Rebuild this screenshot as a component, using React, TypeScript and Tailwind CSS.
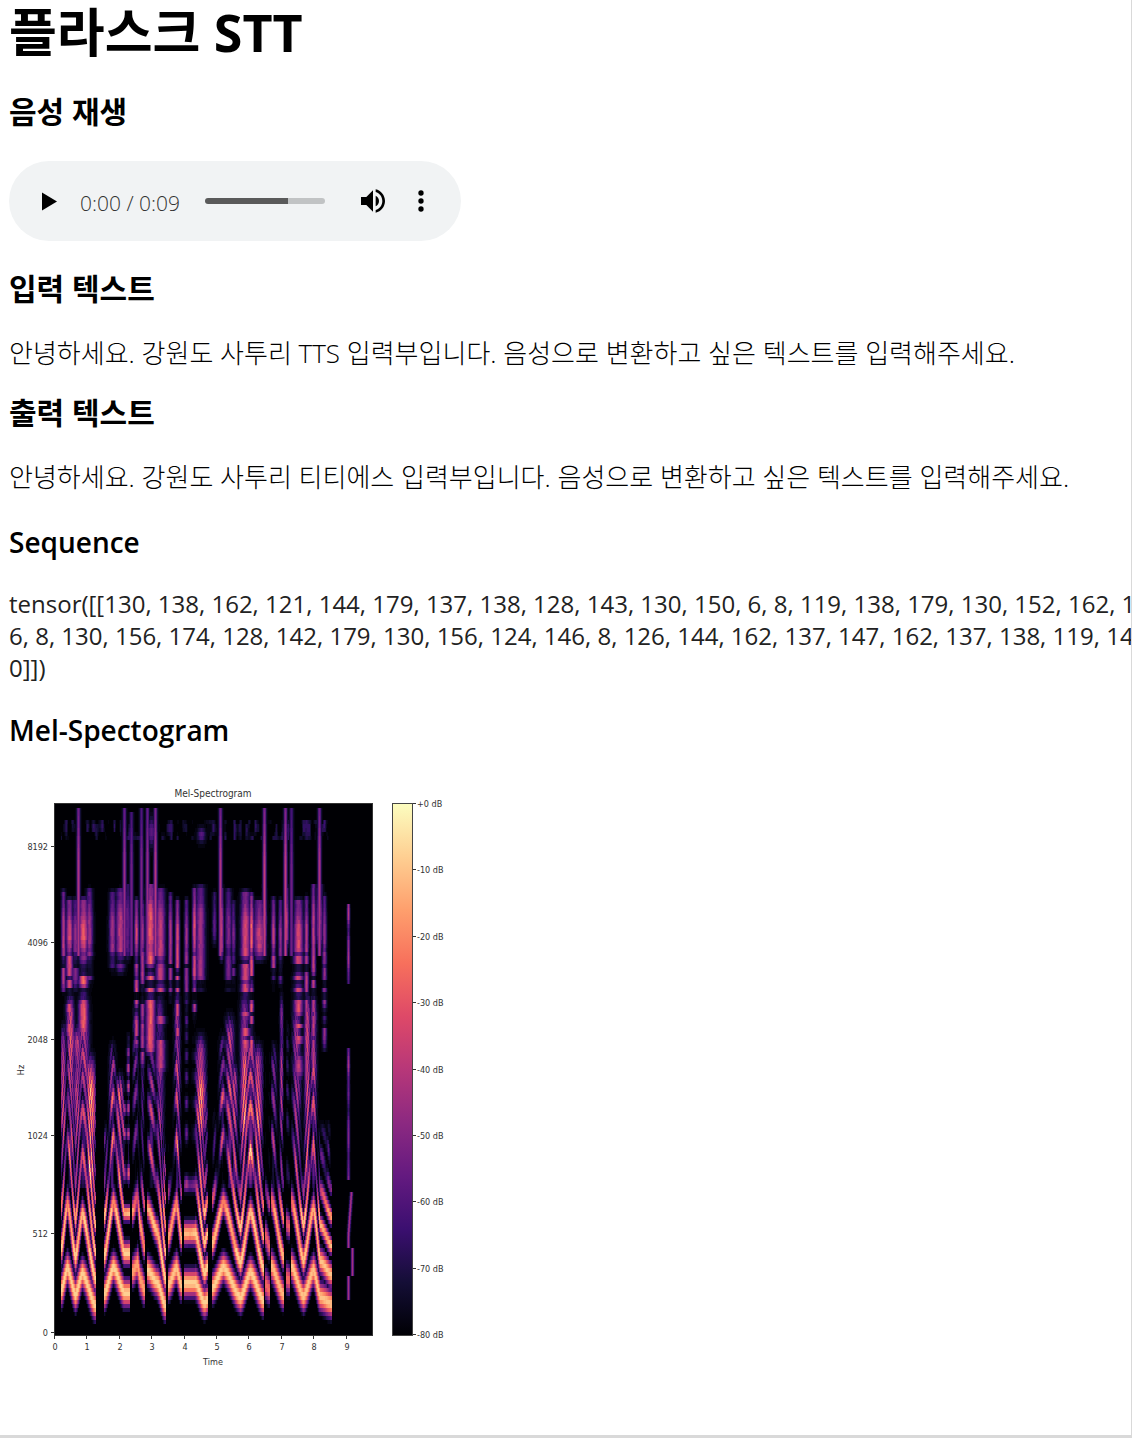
import React, { useMemo, useState } from "react";

const ORIGIN_X = 54;
const ORIGIN_Y = 804;
const PLOT_W = 319;
const PLOT_H = 531;
const CELL_W = 1;
const CELL_H = 4;

const MAGMA: [number, number, number][] = [
  [0, 0, 4],
  [20, 14, 54],
  [59, 15, 112],
  [100, 26, 128],
  [140, 41, 129],
  [183, 55, 121],
  [222, 73, 104],
  [247, 112, 92],
  [254, 159, 109],
  [254, 207, 146],
  [252, 253, 191],
];

function magma(v: number): string {
  const p = Math.max(0, Math.min(0.9999, v)) * (MAGMA.length - 1);
  const i = Math.floor(p);
  const f = p - i;
  const c = MAGMA[i].map((a, k) => Math.round(a + (MAGMA[i + 1][k] - a) * f));
  return `rgb(${c[0]},${c[1]},${c[2]})`;
}

type Voice = { pts: [number, number][]; gain: number };

// Pitch contours: x position and the height of the lowest harmonic.
const VOICES: Voice[] = [
  { pts: [[61, 1290], [67, 1268], [75, 1295], [82, 1273], [95, 1306]], gain: 1 },
  { pts: [[104, 1294], [113, 1267], [124, 1293], [129, 1293]], gain: 1 },
  { pts: [[132, 1272], [137, 1264], [140, 1280], [144, 1290]], gain: 0.9 },
  { pts: [[147, 1270], [157, 1283], [165, 1306]], gain: 1 },
  { pts: [[168, 1285], [176, 1268], [181, 1286]], gain: 0.97 },
  { pts: [[184, 1283], [195, 1283], [204, 1303], [207, 1300]], gain: 1 },
  { pts: [[212, 1288], [223, 1267], [240, 1298], [250, 1272], [263, 1301]], gain: 1 },
  { pts: [[265, 1284], [269, 1290]], gain: 0.75 },
  { pts: [[271, 1266], [283, 1295]], gain: 0.95 },
  { pts: [[286, 1278], [289, 1280]], gain: 0.75 },
  { pts: [[291, 1266], [303, 1297], [313, 1270], [320, 1297], [331, 1304]], gain: 0.97 },
];

const BURSTS: [number, number, number][] = [
  [78, 1, 808], [124, 0.9, 808], [131, 0.7, 812], [141, 0.75, 808], [147, 0.9, 808],
  [155, 1.05, 808], [220, 1, 808], [264, 1.1, 808], [285, 1.1, 808], [291, 0.7, 808], [319, 1, 808],
];

// Upper-band columns: centre, half width, strength, lower end.
const BANDS: [number, number, number, number][] = [
  [63, 1, 0.5, 995], [69, 2, 0.6, 1050], [75, 2, 0.4, 990], [83, 3, 0.68, 1070], [89, 2, 0.45, 985],
  [112, 2, 0.44, 970], [120, 3, 0.52, 972], [127, 2, 0.3, 960], [136, 1, 0.58, 1050], [142, 1, 0.48, 1070],
  [150, 3, 0.66, 1060], [155, 1, 0.46, 960], [160, 3, 0.54, 1080], [170, 1, 0.46, 1000], [177, 1, 0.6, 1060],
  [186, 1, 0.44, 1010], [194, 1, 0.6, 1020], [200, 3, 0.45, 990], [214, 1, 0.3, 945], [221, 1, 0.52, 960],
  [228, 2, 0.36, 990], [233, 1, 0.36, 990], [245, 3, 0.6, 1060], [251, 1, 0.66, 1060], [259, 4, 0.54, 960],
  [264, 1, 0.52, 950], [273, 1, 0.52, 985], [280, 1, 0.42, 985], [286, 1, 0.54, 950], [298, 3, 0.6, 1080],
  [306, 1, 0.5, 1090], [313, 1, 0.52, 1080], [319, 2, 0.42, 950], [324, 1, 0.42, 1050],
];

// Columns that carry the middle harmonics: centre, half width, strength, upper end.
const MIDS: [number, number, number, number][] = [
  [63, 2, 0.75, 1030], [70, 3, 0.8, 1000], [77, 3, 0.7, 1030], [83, 4, 0.75, 1000], [90, 4, 0.95, 1060],
  [105, 2, 0.4, 1130], [112, 2, 0.8, 1050], [119, 3, 0.8, 1080], [123, 2, 0.7, 1100], [128, 1, 0.7, 1040],
  [135, 2, 0.5, 1010], [142, 1, 0.4, 1000], [151, 3, 0.7, 1000], [159, 3, 0.5, 1000], [164, 2, 0.5, 1150],
  [177, 2, 0.8, 1000], [186, 1, 0.4, 1010], [200, 4, 0.8, 1040], [205, 2, 0.5, 1100], [214, 1, 0.35, 1120],
  [222, 2, 0.7, 1040], [229, 3, 0.75, 1020], [234, 2, 0.8, 1070], [244, 3, 0.85, 1000], [250, 3, 0.9, 1040],
  [258, 3, 0.8, 1050], [273, 2, 0.6, 1050], [281, 1, 0.6, 1000], [287, 1, 0.3, 1030], [296, 3, 0.6, 1010],
  [307, 2, 0.8, 1000], [313, 2, 0.75, 1000], [322, 3, 0.45, 1130], [328, 1, 0.35, 1130],
];

function noise(a: number, b: number): number {
  const s = Math.sin(a * 127.1 + b * 311.7) * 43758.5453;
  return s - Math.floor(s);
}

function smooth(a: number, b: number, v: number): number {
  const t = Math.max(0, Math.min(1, (v - a) / (b - a)));
  return t * t * (3 - 2 * t);
}

function softNoise(a: number, b: number): number {
  const i = Math.floor(a);
  const j = Math.floor(b);
  const u = smooth(0, 1, a - i);
  const v = smooth(0, 1, b - j);
  const top = noise(i, j) * (1 - u) + noise(i + 1, j) * u;
  const bottom = noise(i, j + 1) * (1 - u) + noise(i + 1, j + 1) * u;
  return top * (1 - v) + bottom * v;
}

function toHz(y: number): number {
  return y > 1136 ? ((1333 - y) / 197) * 1024 : 1024 * 2 ** ((1136 - y) / 97);
}

function toY(hz: number): number {
  return hz < 1024 ? 1333 - (197 * hz) / 1024 : 1136 - 97 * Math.log2(hz / 1024);
}

function contour(pts: [number, number][], x: number): number | null {
  for (let i = 0; i < pts.length - 1; i++) {
    const [x0, y0] = pts[i];
    const [x1, y1] = pts[i + 1];
    if (x >= x0 && x <= x1) {
      const t = (x - x0) / (x1 - x0);
      return y0 + (y1 - y0) * (t * 0.5 + smooth(0, 1, t) * 0.5);
    }
  }
  return null;
}

function midGain(x: number, y: number): number {
  let g = 0;
  for (const [cx, w, s, top] of MIDS) {
    const d = (x - cx) / (w + 0.5);
    if (Math.abs(d) > 2.5) continue;
    g = Math.max(g, s * Math.exp(-d * d * 0.8) * smooth(top - 15, top + 15, y));
  }
  return g;
}

function level(x: number, y: number): number {
  let v = 0;

  for (const voice of VOICES) {
    const base = contour(voice.pts, x);
    if (base === null) continue;
    const pitch = toHz(base);
    const n = Math.max(1, Math.round(toHz(y) / pitch));
    const next = toHz(contour(voice.pts, x + 1) ?? base);
    const slope = Math.abs(toY(n * next) - toY(n * pitch));
    const width = (n === 1 ? 15 : n === 2 ? 13 : n < 5 ? 9 : 7) + Math.min(slope, 8) * 0.8;
    const d = Math.abs(y - toY(n * pitch));
    const shape = Math.exp(-(d * d) / (width * width));
    const patch = softNoise(x / 5, y / 26);
    const upper = midGain(x, y) * (0.55 + 0.6 * patch);
    let env = 0.9;
    if (y < 1250) env = 0.78 + 0.14 * patch;
    if (y < 1210) env = upper + (0.76 - upper) * smooth(1165, 1210, y);
    if (y < 1120) env *= 0.72 + 0.28 * smooth(1010, 1120, y);
    if (y < 990) env = 0;
    const floor = y < 1190 ? 0.12 : 0.2;
    v = Math.max(v, env * voice.gain * (shape * (1 + floor) - floor));
    if (y > 1000 && y < 1190) v = Math.max(v, (upper - 0.42) * 0.8);
  }

  if (y > 882) {
    for (const [cx, w, g, end] of BANDS) {
      const dx = (x - cx) / (w + 0.8);
      if (Math.abs(dx) > 2.2 || y > end + 10) continue;
      const start = 878 + noise(cx, 5) * 22;
      let e = (0.62 + 0.38 * smooth(start + 10, start + 35, y)) * smooth(start - 2, start + 5, y);
      e *= 1 - smooth(end - 15, end + 8, y);
      e *= 0.9 + 0.15 * noise(Math.floor(x / 2), Math.floor(y / 5));
      if (y > 940) {
        const ripple = softNoise(cx * 3, y / 6);
        e *= 1 - smooth(935, 970, y) * 0.8 * smooth(0.45, 0.75, ripple);
      }
      if (y > 990 && y < 999) e *= 0.3;
      v = Math.max(v, g * e * Math.exp(-dx * dx * 0.75));
    }
  }

  for (const [bx, g, top] of BURSTS) {
    const d = Math.abs(x - bx);
    if (y > top && y < 955) {
      v = Math.max(v, g * 0.47 * Math.exp((-d * d) / 3.2) * (0.7 + 0.3 * smooth(808, 870, y)));
    }
  }

  if (y > 818 && y < 842 && x > 60 && x < 330) {
    v = Math.max(v, 0.4 * (softNoise(x / 3, y / 12) - 0.52));
  }
  const blob = ((x - 201) / 4) ** 2 + ((y - 835) / 7) ** 2;
  v = Math.max(v, 0.28 * Math.exp(-blob));
  const haze = ((x - 151) / 4) ** 2 + ((y - 832) / 14) ** 2;
  v = Math.max(v, 0.28 * Math.exp(-haze));

  const tail = 348 + (y > 1190 && y < 1235 ? (1235 - y) / 14 : y >= 1250 && y < 1275 ? 4 : 0);
  const off = Math.exp(-((x - tail) ** 2) / 2);
  if ((y > 905 && y < 985) || (y > 1048 && y < 1180)) v = Math.max(v, 0.34 * off * (0.5 + softNoise(2, y / 15)));
  if (y > 1190 && y < 1300) v = Math.max(v, 0.45 * off);
  return v;
}

function buildCells() {
  const groups = new Map<number, string[]>();
  for (let x = 0; x < PLOT_W - 1; x += CELL_W) {
    for (let y = 0; y < PLOT_H - 3; y += CELL_H) {
      const v = level(ORIGIN_X + x, ORIGIN_Y + y + 2);
      const q = Math.round(v * 40);
      if (q < 1) continue;
      if (!groups.has(q)) groups.set(q, []);
      groups.get(q)!.push(`M${ORIGIN_X + x} ${ORIGIN_Y + y}h${CELL_W}v${CELL_H}h-${CELL_W}z`);
    }
  }
  return [...groups.entries()].map(([q, d]) => ({ color: magma(q / 40), d: d.join("") }));
}

const HZ_TICKS: [string, number][] = [
  ["8192", 847], ["4096", 943], ["2048", 1040], ["1024", 1136], ["512", 1234], ["0", 1333],
];
const DB_TICKS = ["+0 dB", "-10 dB", "-20 dB", "-30 dB", "-40 dB", "-50 dB", "-60 dB", "-70 dB", "-80 dB"];

function Spectrogram() {
  const cells = useMemo(buildCells, []);
  return (
    <svg
      className="block h-[600px] w-[460px] font-['DejaVu_Sans_Condensed','DejaVu_Sans',sans-serif] text-[9px]"
      viewBox="0 780 460 600"
      role="img"
      aria-label="Mel-Spectrogram"
    >
      <defs>
        <linearGradient id="magma" x1="0" y1="1" x2="0" y2="0">
          {MAGMA.map((c, i) => (
            <stop key={i} offset={i / (MAGMA.length - 1)} stopColor={`rgb(${c.join(",")})`} />
          ))}
        </linearGradient>
      </defs>
      <rect x="54" y="804" width="319" height="531" fill="#000004" />
      {cells.map((c) => (
        <path key={c.color} d={c.d} fill={c.color} />
      ))}
      <rect x="54.5" y="803.5" width="318" height="532" fill="none" stroke="#333" />
      <rect x="392.5" y="803.5" width="20" height="532" fill="url(#magma)" stroke="#444" />
      <g fill="#333">
        <text x="213" y="797" textAnchor="middle" fontSize="10">Mel-Spectrogram</text>
        <text x="213" y="1365" textAnchor="middle" fontSize="9">Time</text>
        <text x="24" y="1070" textAnchor="middle" fontSize="9" transform="rotate(-90 24 1070)">Hz</text>
        {HZ_TICKS.map(([t, y]) => (
          <g key={t}>
            <path d={`M51 ${y - 0.5}h3`} stroke="#333" />
            <text x="48" y={y + 3} textAnchor="end">{t}</text>
          </g>
        ))}
        {Array.from({ length: 10 }, (_, i) => {
          const x = 54 + Math.round(i * 32.4);
          return (
            <g key={i}>
              <path d={`M${x + 0.5} 1336v3`} stroke="#333" />
              <text x={x + 1} y="1350" textAnchor="middle">{i}</text>
            </g>
          );
        })}
        {DB_TICKS.map((t, i) => {
          const y = 804 + Math.round(i * 66.4);
          return (
            <g key={t}>
              <path d={`M413 ${y - 0.5}h3`} stroke="#333" />
              <text x="417" y={y + 3}>{t}</text>
            </g>
          );
        })}
      </g>
    </svg>
  );
}

function Player() {
  const [pos, setPos] = useState(0);
  return (
    <div className="flex h-20 w-[452px] items-center rounded-full bg-[#f1f3f4] text-black">
      <button aria-label="재생" className="ml-6 flex size-8 shrink-0 items-center justify-center">
        <svg className="size-8" viewBox="0 0 32 32" fill="currentColor">
          <path d="M9 7.5v18L24 16.5z" />
        </svg>
      </button>
      <span className="ml-[15px] w-[125px] shrink-0 pt-1 font-['Open_Sans',sans-serif] text-[21px] font-light text-[#333]">
        0:00 / 0:09
      </span>
      <input
        type="range"
        aria-label="재생 위치"
        min={0}
        max={9}
        value={pos}
        onChange={(e) => setPos(Number(e.target.value))}
        className="h-1.5 w-[120px] shrink-0 appearance-none rounded-full bg-[linear-gradient(to_right,#5a5a5a_69%,#c1c3c4_69%)] [&::-webkit-slider-thumb]:size-0 [&::-webkit-slider-thumb]:appearance-none"
      />
      <button aria-label="음소거" className="ml-8 flex size-8 shrink-0 items-center justify-center">
        <svg className="size-8" viewBox="0 0 24 24" fill="currentColor">
          <path d="M3 9v6h4l5 5V4L7 9H3zm13.5 3A4.5 4.5 0 0 0 14 7.97v8.05c1.48-.73 2.5-2.25 2.5-4.02zM14 3.23v2.06c2.89.86 5 3.54 5 6.71s-2.11 5.85-5 6.71v2.06c4.01-.91 7-4.49 7-8.77s-2.99-7.86-7-8.77z" />
        </svg>
      </button>
      <button aria-label="옵션 더보기" className="ml-4 flex size-8 shrink-0 items-center justify-center">
        <svg className="size-8" viewBox="0 0 24 24" fill="currentColor">
          <circle cx="12" cy="6" r="2" />
          <circle cx="12" cy="12" r="2" />
          <circle cx="12" cy="18" r="2" />
        </svg>
      </button>
    </div>
  );
}

const H3_KO = "text-[30px] leading-10 font-bold";
const H3_EN = "text-[28px] leading-10 font-semibold";

export default function App() {
  return (
    <main className="min-h-screen overflow-hidden border-r border-b-[3px] border-[#d9d9d9] bg-white pl-[9px] font-['Open_Sans','Noto_Sans_CJK_KR',sans-serif] text-[26px] leading-8 text-black">
      <h1 className="text-[52px] leading-[64px] font-bold">플라스크 STT</h1>

      <section className="mt-7">
        <h3 className={H3_KO}>음성 재생</h3>
        <div className="mt-[29px]">
          <Player />
        </div>
      </section>

      <section className="mt-7">
        <h3 className={H3_KO}>입력 텍스트</h3>
        <p className="mt-7 font-light whitespace-nowrap">
          안녕하세요. 강원도 사투리 TTS 입력부입니다. 음성으로 변환하고 싶은 텍스트를 입력해주세요.
        </p>
      </section>

      <section className="mt-6">
        <h3 className={H3_KO}>출력 텍스트</h3>
        <p className="mt-7 font-light whitespace-nowrap">
          안녕하세요. 강원도 사투리 티티에스 입력부입니다. 음성으로 변환하고 싶은 텍스트를 입력해주세요.
        </p>
      </section>

      <section className="mt-[29px]">
        <h3 className={H3_EN}>Sequence</h3>
        <p className="mt-[26px] text-[24px] whitespace-pre text-[#222]">
          {"tensor([[130, 138, 162, 121, 144, 179, 137, 138, 128, 143, 130, 150, 6, 8, 119, 138, 179, 130, 152, 162, 1\n6, 8, 130, 156, 174, 128, 142, 179, 130, 156, 124, 146, 8, 126, 144, 162, 137, 147, 162, 137, 138, 119, 14\n0]])"}
        </p>
      </section>

      <section className="mt-[26px]">
        <h3 className={H3_EN}>Mel-Spectogram</h3>
        <div className="mt-[30px] -ml-[9px]">
          <Spectrogram />
        </div>
      </section>
    </main>
  );
}
